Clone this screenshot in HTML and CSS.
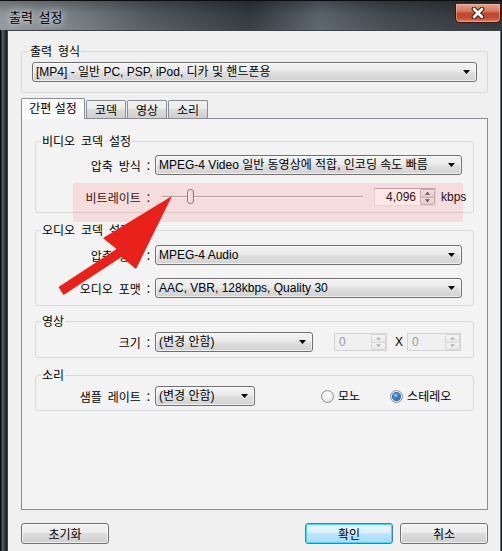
FILE: index.html
```html
<!DOCTYPE html>
<html lang="ko">
<head>
<meta charset="utf-8">
<title>출력 설정</title>
<link rel="stylesheet" href="styles.css">
</head>
<body>
<div class="window">
  <div class="titlebar">
    <span class="title">출력 설정</span>
    <div class="close">
      <svg width="18" height="12" viewBox="0 0 18 12">
        <path d="M5 2 L13 10 M13 2 L5 10" stroke="#4a1c14" stroke-width="4.6" stroke-linecap="round"/>
        <path d="M5 2 L13 10 M13 2 L5 10" stroke="#ffffff" stroke-width="2.6" stroke-linecap="round"/>
      </svg>
    </div>
  </div>
  <div class="frame">
    <div class="frame-left"></div>
    <div class="client">
      <fieldset class="group group-format">
        <legend>출력 형식</legend>
        <div class="combo combo-format"><span class="combo-text">[MP4] - 일반 PC, PSP, iPod, 디카 및 핸드폰용</span></div>
      </fieldset>

      <div class="tabs">
        <div class="tab active">간편 설정</div>
        <div class="tab">코덱</div>
        <div class="tab">영상</div>
        <div class="tab">소리</div>
      </div>

      <div class="panel">
        <fieldset class="group g-video">
          <legend>비디오 코덱 설정</legend>
          <div class="row">
            <span class="lbl">압축 방식 :</span>
            <div class="combo grow"><span class="combo-text">MPEG-4 Video 일반 동영상에 적합, 인코딩 속도 빠름</span></div>
          </div>
          <div class="row row-bitrate">
            <span class="lbl">비트레이트 :</span>
            <div class="slider"><div class="track"></div><div class="thumb"></div></div>
            <div class="spin spin-rate">
              <span class="val">4,096</span>
              <div class="spin-btns"><span class="up"></span><span class="down"></span></div>
            </div>
            <span class="unit">kbps</span>
          </div>
        </fieldset>

        <fieldset class="group g-audio">
          <legend>오디오 코덱 설정</legend>
          <div class="row">
            <span class="lbl">압축 방식 :</span>
            <div class="combo grow"><span class="combo-text">MPEG-4 Audio</span></div>
          </div>
          <div class="row row-gap">
            <span class="lbl">오디오 포맷 :</span>
            <div class="combo grow"><span class="combo-text">AAC, VBR, 128kbps, Quality 30</span></div>
          </div>
        </fieldset>

        <fieldset class="group g-image">
          <legend>영상</legend>
          <div class="row">
            <span class="lbl">크기 :</span>
            <div class="combo combo-size"><span class="combo-text">(변경 안함)</span></div>
            <div class="spin spin-off spin-w">
              <span class="val">0</span>
              <div class="spin-btns"><span class="up"></span><span class="down"></span></div>
            </div>
            <span class="times">X</span>
            <div class="spin spin-off spin-h">
              <span class="val">0</span>
              <div class="spin-btns"><span class="up"></span><span class="down"></span></div>
            </div>
          </div>
        </fieldset>

        <fieldset class="group g-sound">
          <legend>소리</legend>
          <div class="row">
            <span class="lbl">샘플 레이트 :</span>
            <div class="combo combo-rate"><span class="combo-text">(변경 안함)</span></div>
            <label class="radio radio-mono"><span class="dot"></span>모노</label>
            <label class="radio radio-stereo"><span class="dot checked"></span>스테레오</label>
          </div>
        </fieldset>
      </div>

      <div class="buttons">
        <div class="btn">초기화</div>
        <div class="btn default push">확인</div>
        <div class="btn">취소</div>
      </div>
    </div>
    <div class="frame-right"></div>
  </div>

  <svg class="annotation" width="502" height="551" viewBox="0 0 502 551">
    <rect x="73" y="183" width="390" height="39" fill="rgb(255,110,110)" fill-opacity="0.17"/>
    <polygon points="58.5,287 116.5,249 103,238 172,196 136,269 121.5,257 63.5,295" fill="#e8221b"/>
  </svg>
</div>
</body>
</html>
```

FILE: styles.css
```css
* { box-sizing: border-box; }

html, body {
  margin: 0;
  padding: 0;
}

body {
  width: 502px;
  height: 551px;
  overflow: hidden;
  background: #1a1e21;
  font-family: "Liberation Sans", "Noto Sans CJK KR", sans-serif;
  font-size: 12px;
  color: #000;
}

.window {
  position: relative;
  width: 502px;
  height: 551px;
  display: flex;
  flex-direction: column;
}

/* ---------- title bar ---------- */
.titlebar {
  flex: none;
  height: 30px;
  display: flex;
  align-items: flex-start;
  padding-left: 9px;
  border-top: 1px solid #0c0d0e;
  background:
    linear-gradient(to bottom, rgba(0,0,0,0.25) 0, rgba(0,0,0,0) 45%, rgba(255,255,255,0.05) 100%),
    linear-gradient(to right, #8f969b 0, #7b8388 60px, #4f575d 150px, #30373d 250px, #59616a 320px, #3f464c 390px, #2b3136 502px);
}

.title {
  margin-top: 8px;
  font-family: "Noto Sans CJK KR", sans-serif;
  font-size: 13px;
  line-height: 16px;
  color: #000;
  word-spacing: 2px;
  text-shadow: 0 0 6px rgba(255,255,255,0.9), 0 0 12px rgba(255,255,255,0.6);
}

.close {
  margin-left: auto;
  margin-top: 3px;
  margin-right: 1px;
  width: 46px;
  height: 19px;
  display: flex;
  align-items: center;
  justify-content: center;
  border: 1px solid #3d150e;
  border-top: none;
  border-radius: 0 0 5px 5px;
  background: linear-gradient(to bottom, #e6a490 0%, #d57760 40%, #c2462e 52%, #c34c33 78%, #dc8667 100%);
  box-shadow: inset 0 0 0 1px rgba(255,200,180,0.45);
}

/* ---------- frame ---------- */
.frame {
  flex: 1;
  display: flex;
}

.frame-left {
  width: 7px;
  background: linear-gradient(to right, #0b0c0d 0, #0b0c0d 1px, #566069 2px, #3b444b 4px, #252a2f 6px, #15181b 7px);
}

.frame-right {
  width: 1px;
  background: #1a1d20;
}

.client {
  width: 494px;
  border-top: 1px solid #3c4247;
  border-left: 1px solid #3c4247;
  border-right: 1px solid #6b7177;
  background: #f0f0f0;
  padding: 13px 12px 0 13px;
}

/* ---------- group boxes ---------- */
.group {
  margin: 0;
  min-width: 0;
  border: 1px solid #d5d9dc;
  border-radius: 3px;
}

.group legend {
  line-height: 14px;
  padding: 0 1px;
  margin-left: 5px;
  font-family: "Noto Sans CJK KR", sans-serif;
  word-spacing: 2.5px;
}

.group-format {
  padding: 4px 10px 10px 10px;
}

.group-format legend {
  margin-left: -3px;
}

.g-video { padding: 7px 11px 6px 0; }
.g-audio { padding: 8px 11px 7px 0; margin-top: 10px; }
.g-image { padding: 4px 11px 5px 0; margin-top: 8px; }
.g-sound { padding: 4px 11px 4px 0; margin-top: 10px; }

.row {
  display: flex;
  align-items: center;
  height: 20px;
}

.row-gap { margin-top: 13px; }

.row-bitrate {
  height: 18px;
  margin-top: 13px;
}

.lbl {
  flex: none;
  width: 119px;
  padding-right: 5px;
  text-align: right;
  white-space: nowrap;
  font-family: "Noto Sans CJK KR", sans-serif;
  word-spacing: 2.5px;
}

/* ---------- combo boxes ---------- */
.combo {
  height: 20px;
  display: flex;
  align-items: center;
  padding: 0 6px 0 3px;
  border: 1px solid #707070;
  border-radius: 3px;
  background: linear-gradient(to bottom, #f3f3f3 0%, #ebebeb 45%, #dedede 55%, #d2d2d2 100%);
  box-shadow: inset 0 0 0 1px rgba(255,255,255,0.65);
  white-space: nowrap;
  overflow: hidden;
}

.combo::after {
  content: "";
  flex: none;
  width: 7px;
  height: 4px;
  margin-left: auto;
  background: #000;
  clip-path: polygon(0 0, 100% 0, 50% 100%);
}

.combo-text {
  flex: 1;
  line-height: 16px;
}

.grow { flex: 1; }
.combo-size { width: 158px; }
.combo-rate { width: 100px; }

/* ---------- slider ---------- */
.slider {
  position: relative;
  flex: none;
  width: 213px;
  height: 18px;
  display: flex;
  align-items: center;
  padding: 0 5px 0 7px;
}

.track {
  flex: 1;
  height: 2px;
  border-top: 1px solid #a8a8a8;
  border-bottom: 1px solid #ffffff;
}

.thumb {
  position: absolute;
  left: 32px;
  top: 1px;
  width: 7px;
  height: 15px;
  border: 1px solid #7f7f7f;
  border-radius: 3px;
  background: linear-gradient(to right, #ffffff, #e4e4e4);
}

/* ---------- spin boxes ---------- */
.spin {
  flex: none;
  height: 18px;
  display: flex;
  border: 1px solid #abadb3;
  border-color: #abadb3 #dbdfe6 #e3e9ef #e2e3ea;
  background: #fff;
}

.spin .val {
  flex: 1;
  line-height: 16px;
  padding: 0 4px;
}

.spin-rate {
  width: 62px;
  margin-left: 6px;
}

.spin-rate .val { text-align: right; }

.spin-btns {
  flex: none;
  width: 15px;
  display: flex;
  flex-direction: column;
}

.spin-btns span {
  flex: 1;
  display: flex;
  align-items: center;
  justify-content: center;
  border: 1px solid #b6b9bd;
  background: linear-gradient(to bottom, #f4f4f4, #dcdcdc);
}

.spin-btns .up { border-bottom: none; border-radius: 2px 2px 0 0; }
.spin-btns .down { border-radius: 0 0 2px 2px; }

.spin-btns span::after {
  content: "";
  width: 5px;
  height: 3px;
  background: #4d4d4d;
}

.spin-btns .up::after { clip-path: polygon(50% 0, 100% 100%, 0 100%); }
.spin-btns .down::after { clip-path: polygon(0 0, 100% 0, 50% 100%); }

.unit {
  margin-left: 5px;
  line-height: 16px;
}

.spin-off {
  border-color: #d3d3d3;
  background: #f0f0f0;
  color: #9b9b9b;
}

.spin-off .spin-btns span {
  border-color: #d6d6d6;
  background: linear-gradient(to bottom, #f5f5f5, #e8e8e8);
}

.spin-off .spin-btns span::after { background: #b3b3b3; }

.spin-w { width: 53px; margin-left: 21px; }
.spin-h { width: 54px; margin-left: 4px; }

.times {
  margin-left: 8px;
  line-height: 16px;
}

/* ---------- radio ---------- */
.radio {
  display: flex;
  align-items: center;
  gap: 4px;
  font-family: "Noto Sans CJK KR", sans-serif;
  line-height: 16px;
}

.radio-mono { margin-left: 66px; }
.radio-stereo { margin-left: 30px; }

.dot {
  width: 13px;
  height: 13px;
  border-radius: 50%;
  border: 1px solid #8f8f8f;
  background: radial-gradient(circle at 50% 35%, #ffffff 0%, #ececec 60%, #d4d4d4 100%);
  display: flex;
  align-items: center;
  justify-content: center;
}

.dot.checked::after {
  content: "";
  width: 7px;
  height: 7px;
  border-radius: 50%;
  background: radial-gradient(circle at 40% 35%, #8fd0ff 0%, #2d7cc6 45%, #11417c 100%);
  box-shadow: 0 0 0 1px #275f8f;
}

/* ---------- tabs ---------- */
.tabs {
  position: relative;
  z-index: 1;
  display: flex;
  align-items: flex-end;
  height: 21px;
  margin-top: 5px;
  margin-bottom: -1px;
}

.tab {
  width: 40px;
  height: 18px;
  margin-left: 1px;
  margin-bottom: 1px;
  display: flex;
  align-items: center;
  justify-content: center;
  border: 1px solid #898c95;
  border-bottom: none;
  border-radius: 2px 2px 0 0;
  background: linear-gradient(to bottom, #f2f2f2 0%, #ebebeb 50%, #dddddd 50%, #cfcfcf 100%);
  font-family: "Noto Sans CJK KR", sans-serif;
  line-height: 14px;
}

.tab.active {
  width: 64px;
  height: 21px;
  margin-left: 0;
  margin-bottom: 0;
  padding-bottom: 2px;
  background: #fbfbfb;
}

.panel {
  height: 392px;
  padding: 15px 13px;
  border: 1px solid #898c95;
  background: #f3f3f3;
}

/* ---------- buttons ---------- */
.buttons {
  display: flex;
  gap: 7px;
  margin-top: 13px;
}

.btn {
  width: 88px;
  height: 21px;
  display: flex;
  align-items: center;
  justify-content: center;
  border: 1px solid #707070;
  border-radius: 3px;
  background: linear-gradient(to bottom, #f2f2f2 0%, #ebebeb 50%, #dddddd 50%, #cfcfcf 100%);
  box-shadow: inset 0 0 0 1px rgba(255,255,255,0.7);
  font-family: "Noto Sans CJK KR", sans-serif;
  line-height: 14px;
}

.btn.push { margin-left: auto; }

.btn.default {
  border-color: #3c7fb1;
  background: linear-gradient(to bottom, #eaf6fd 0%, #d9f0fc 50%, #bee6fd 50%, #a7d9f5 100%);
  box-shadow: inset 0 0 0 1px #48d8fb;
}

/* ---------- annotation overlay ---------- */
.annotation {
  position: absolute;
  left: 0;
  top: 0;
  pointer-events: none;
}
```
